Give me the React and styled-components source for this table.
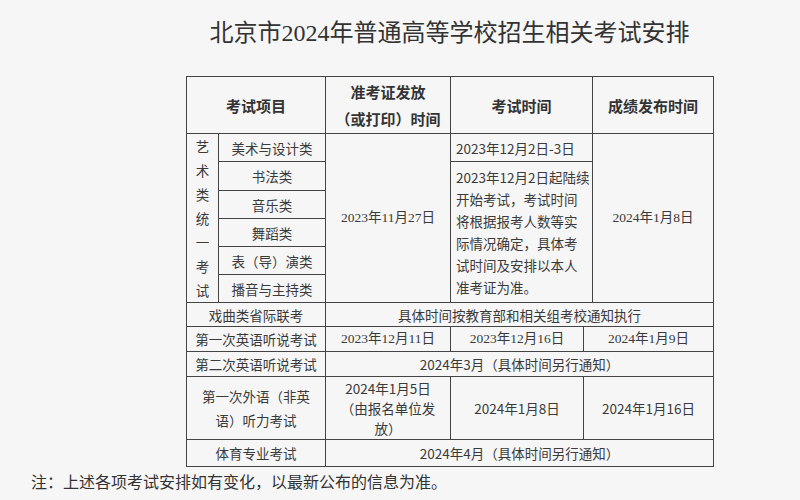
import React from 'react';
import styled, { createGlobalStyle } from 'styled-components';

const GlobalStyle = createGlobalStyle`
  html, body {
    margin: 0;
    padding: 0;
    background: #f6f6f6;
  }
  body {
    font-family: "Noto Sans CJK SC", sans-serif;
    color: #333;
  }
`;

const Page = styled.div`
  width: 800px;
  height: 500px;
  overflow: hidden;
  display: flex;
  flex-direction: column;
`;

const Title = styled.h1`
  margin: 16px 0 26px 186px;
  width: 527px;
  text-align: center;
  font-family: "Liberation Serif", "Noto Sans CJK SC", serif;
  font-weight: 400;
  font-size: 24px;
  line-height: 34px;
  color: #333;
`;

const Table = styled.table`
  margin-left: 186px;
  width: 528px;
  border-collapse: collapse;
  table-layout: fixed;
  background: #f6f6f6;
`;

const Row = styled.tr`
  height: ${({ $h }) => $h}px;
`;

const Head = styled.th`
  border: 1px solid #444;
  padding: 0;
  font-size: 15px;
  font-weight: 700;
  line-height: 27px;
  color: #333;
  text-align: center;
  vertical-align: middle;
`;

const Cell = styled.td`
  border: 1px solid #444;
  padding: ${({ $left }) => ($left ? '0 4px 0 5px' : '0')};
  font-family: ${({ $serif }) =>
    $serif
      ? '"Liberation Serif", "Noto Sans CJK SC", serif'
      : '"Noto Sans CJK SC", sans-serif'};
  font-size: 13.5px;
  line-height: ${({ $lh }) => $lh || 20}px;
  color: #3a3a3a;
  text-align: ${({ $left }) => ($left ? 'left' : 'center')};
  vertical-align: middle;
  white-space: nowrap;
`;

const Vertical = styled.div`
  display: flex;
  flex-direction: column;
  align-items: center;
  font-size: 13.5px;
  line-height: 24px;
`;

const Note = styled.p`
  margin: 2px 0 0 31px;
  font-size: 16px;
  line-height: 24px;
  color: #333;
`;

const artRows = ['书法类', '音乐类', '舞蹈类', '表（导）演类', '播音与主持类'];

export default function App() {
  return (
    <Page>
      <GlobalStyle />
      <Title>北京市2024年普通高等学校招生相关考试安排</Title>
      <Table>
        <colgroup>
          <col style={{ width: 32 }} />
          <col style={{ width: 107 }} />
          <col style={{ width: 125 }} />
          <col style={{ width: 133 }} />
          <col style={{ width: 9 }} />
          <col style={{ width: 121 }} />
        </colgroup>
        <tbody>
          <Row $h={57}>
            <Head colSpan={2}>考试项目</Head>
            <Head>
              准考证发放
              <br />
              （或打印）时间
            </Head>
            <Head colSpan={2}>考试时间</Head>
            <Head>成绩发布时间</Head>
          </Row>
          <Row $h={28}>
            <Cell rowSpan={6}>
              <Vertical>
                {'艺术类统一考试'.split('').map((c, i) => (
                  <span key={i}>{c}</span>
                ))}
              </Vertical>
            </Cell>
            <Cell>美术与设计类</Cell>
            <Cell rowSpan={6} $serif>
              2023年11月27日
            </Cell>
            <Cell colSpan={2} $left>
              2023年12月2日-3日
            </Cell>
            <Cell rowSpan={6} $serif>
              2024年1月8日
            </Cell>
          </Row>
          {artRows.map((name, i) => (
            <Row $h={28} key={name}>
              <Cell>{name}</Cell>
              {i === 0 && (
                <Cell rowSpan={5} colSpan={2} $left $lh={22}>
                  2023年12月2日起陆续
                  <br />
                  开始考试，考试时间
                  <br />
                  将根据报考人数等实
                  <br />
                  际情况确定，具体考
                  <br />
                  试时间及安排以本人
                  <br />
                  准考证为准。
                </Cell>
              )}
            </Row>
          ))}
          <Row $h={24}>
            <Cell colSpan={2}>戏曲类省际联考</Cell>
            <Cell colSpan={4}>具体时间按教育部和相关组考校通知执行</Cell>
          </Row>
          <Row $h={25}>
            <Cell colSpan={2}>第一次英语听说考试</Cell>
            <Cell $serif>2023年12月11日</Cell>
            <Cell $serif>2023年12月16日</Cell>
            <Cell colSpan={2} $serif>
              2024年1月9日
            </Cell>
          </Row>
          <Row $h={25}>
            <Cell colSpan={2}>第二次英语听说考试</Cell>
            <Cell colSpan={4}>2024年3月（具体时间另行通知）</Cell>
          </Row>
          <Row $h={63}>
            <Cell colSpan={2} $lh={24}>
              第一次外语（非英
              <br />
              语）听力考试
            </Cell>
            <Cell $lh={20}>
              2024年1月5日
              <br />
              （由报名单位发
              <br />
              放）
            </Cell>
            <Cell>2024年1月8日</Cell>
            <Cell colSpan={2}>2024年1月16日</Cell>
          </Row>
          <Row $h={27}>
            <Cell colSpan={2}>体育专业考试</Cell>
            <Cell colSpan={4}>2024年4月（具体时间另行通知）</Cell>
          </Row>
        </tbody>
      </Table>
      <Note>注：上述各项考试安排如有变化，以最新公布的信息为准。</Note>
    </Page>
  );
}
